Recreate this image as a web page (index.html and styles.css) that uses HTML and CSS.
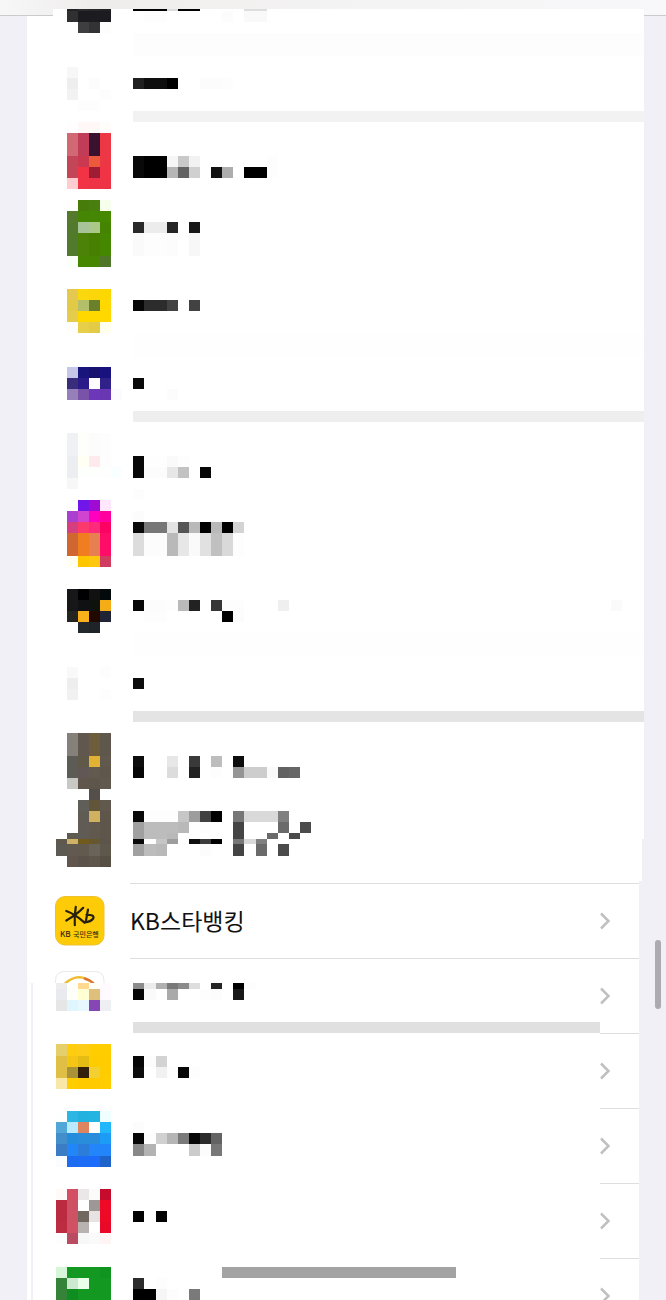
FILE: index.html
```html
<!DOCTYPE html>
<html lang="ko">
<head>
<meta charset="utf-8">
<meta name="viewport" content="width=device-width, initial-scale=1">
<title>설정</title>
<link rel="stylesheet" href="styles.css">
</head>
<body>
<header class="topbar"><div class="topbar-cover"></div></header>
<main class="page">
<section class="group group-upper">
  <div class="row row-first">
    <svg class="icon" viewBox="55 16 60 42" data-cells="9 2 6 222224 2c2c2e 29292b 222224;11 11 6 303032 1c1b20 1c1b20 1c1b20;22 11 7 3e3e40 333335 fdfdfd"></svg>
    <svg class="label" viewBox="130 16 200 42" data-cells="9 2 12 000 000 000 ddd 000 000 - - - - ddd ddd;11 11 12 - fdfdfd fdfdfd - - - - - fcfcfc - f9f9f9 f9f9f9"></svg>
    <div class="haze"></div>
  </div>
  <div class="row">
    <svg class="icon" viewBox="55 58 60 75" data-cells="67 11 6 f7f7f7;78 11 6 eee - fcfcfc;89 11 6 f2f2f2 - - fdfdfd;100 11 7 fdfdfd fdfdfd;122 11 6 fffdfd fff8f7 fff8f7 fffdfc"></svg>
    <svg class="label" viewBox="130 58 200 75" data-cells="78 11 12 202020 0e0e0e 0e0e0e 000 - - fcfcfc fcfcfc fdfdfd"></svg>
    <div class="divider"></div>
  </div>
  <div class="row">
    <svg class="icon" viewBox="55 133 60 75" data-cells="133 23 6 d06973 c13c57 3a112f ed3745;156 11 6 c24558 cb3951 ed5a3b ed3745;167 11 6 c24558 f23345 9e1c34 f03345;178 11 6 ffcccf f23345 ef3346 ef3346"></svg>
    <svg class="label" viewBox="130 133 200 75" data-cells="156 11 12 090909 000 000 f6f6f6 c9c9c9 f2f2f2 - - - - - - fdfdfd;167 11 12 090909 000 000 b5b5b5 626262 d0d0d0 - 111 adadad - 000 000 fdfdfd"></svg>
  </div>
  <div class="row">
    <svg class="icon" viewBox="55 208 60 75" data-cells="200 11 6 fdfffc 477c0b 47800e f6ffeb;211 11 6 567a2d 468605 468605 468900;222 11 6 517a2c a8c399 aac989 458400;233 23 6 517a2c 4b8207 478001 458700;256 11 6 fafff7 468600 468600 50762a"></svg>
    <svg class="label" viewBox="130 208 200 75" data-cells="222 11 12 292929 ececec ececec 252525 - 171717;233 23 12 fafafa fdfdfd fdfdfd fcfcfc - f7f7f7"></svg>
  </div>
  <div class="row">
    <svg class="icon" viewBox="55 283 60 75" data-cells="289 11 6 e5c84f fbd80e fbd60b fdd800;300 11 6 e2ca47 b4c069 6b802a ffd800;311 11 6 e5cc4c ffd800 ffd800 ffd800;322 11 6 fdfdfb e8cf4a e3cb45 ffffef"></svg>
    <svg class="label" viewBox="130 283 200 75" data-cells="300 11 12 060606 2c2c2c 2c2c2c 424242 - 424242"></svg>
    <div class="haze haze-faint"></div>
  </div>
  <div class="row">
    <svg class="icon" viewBox="55 358 60 75" data-cells="367 11 6 c5c6e8 18157d 18126f 18127f;378 11 6 392c7b 2b1b89 fff 30218a;389 11 6 977fb9 7853a8 6d37b9 6937b3 fcf9ff"></svg>
    <svg class="label" viewBox="130 358 200 75" data-cells="378 11 12 0a0a0a;389 11 15 fcfcfc"></svg>
    <div class="divider divider-mid"></div>
  </div>
  <div class="row">
    <svg class="icon" viewBox="55 433 60 75" data-cells="433 23 6 eff1f4 fefefb fcfcfc fdfdfd;456 11 6 eceef1 fffff3 ffebee fdfdfd;467 11 6 eceef1 fdfffc fcfffb fefefe f9ffff;478 11 6 f7f7f7"></svg>
    <svg class="label" viewBox="130 433 200 75" data-cells="456 11 12 080808 fefefe fefefe fafafa fdfdfd;467 11 12 080808 fcfcfc fcfcfc e7e7e7 c2c2c2 - 080808;489 11 12 fdfdfd"></svg>
  </div>
  <div class="row">
    <svg class="icon" viewBox="55 508 60 75" data-cells="500 11 6 fdffff 7116e8 a00bd4 ffe8ff;511 11 6 aa3fd0 d044d0 ff00bf ff009e;522 11 6 d53f80 fc396c ff2b7a fb0263;533 23 6 d06630 f07d20 e77f52 ff0b68;556 11 6 fffff2 ffc600 ffc80c d03d60"></svg>
    <svg class="label" viewBox="130 508 200 75" data-cells="511 11 12 fcfcfc;522 11 12 090909 777 777 e3e3e3 555 b9b9b9 000 b9b9b9 000 d3d3d3;533 23 12 dcdcdc fcfcfc fcfcfc b9b9b9 e7e7e7 fafafa e1e1e1 c0c0c0 d9d9d9 fdfdfd"></svg>
  </div>
  <div class="row">
    <svg class="icon" viewBox="55 583 60 75" data-cells="589 11 6 171719 000002 111112 040a0b;600 11 6 171719 101112 0e120d f4ad17;611 11 6 242420 f8b01b 210900 202435;622 11 7 23282c 1e2427"></svg>
    <svg class="label" viewBox="130 583 200 75" data-cells="600 11 12 060606 fcfcfc fcfcfc fdfdfd b9b9b9 222 - 363636 fdfdfd fdfdfd - - - efefef;600 11 55 fafafa;611 11 12 - fdfdfd fdfdfd - - - - - 000 fcfcfc"></svg>
    <div class="haze haze-faint"></div>
  </div>
  <div class="row">
    <svg class="icon" viewBox="55 658 60 75" data-cells="667 11 6 f9f9f9 - - fdfdfd;678 11 6 eee;689 11 6 f1f1f1 - - fdfdfd"></svg>
    <svg class="label" viewBox="130 658 200 75" data-cells="678 11 12 0c0c0c"></svg>
    <div class="divider divider-dark"></div>
  </div>
  <div class="row">
    <svg class="icon" viewBox="55 733 60 75" data-cells="733 23 6 85817a 60584e 6d5d3a 5f574b;756 11 6 5d5b55 605947 e1b233 61584e;767 11 6 5d5b55 615755 62594f 5f574c;778 11 6 c8c8c4 60564c 5e564b 61594e;789 11 8 544f4a"></svg>
    <svg class="label" viewBox="130 733 200 75" data-cells="756 11 12 0d0d0d - - e7e7e7 - 393939 - bdbdbd - 0d0d0d;767 11 12 060606 - - dcdcdc - 222 - fdfdfd - 959595 cdcdcd cdcdcd fafafa 626262 666"></svg>
  </div>
  <div class="row row-step">
    <svg class="icon" viewBox="55 808 60 75" data-cells="800 11 7 605e58 62563a 61594d;811 11 7 605b53 d0b162 5e564a;822 11 7 605b54 62594e 5e564b;833 6 6 5e5b51 605b54 62594e 5e564b;839 5 5 5f584f d0b168 705a1c 65572e 5d554a;844 12 5 5d5a54 625a50 625a4f 69635a 5e574b;856 11 6 60564d 5b5349 5e564b 564f44"></svg>
    <svg class="label" viewBox="130 808 200 75" data-cells="811 11 12 090909 fdfdfd fdfdfd fdfdfd c6c6c6 9d9d9d 404040 000 - 777 d9d9d9 d9d9d9 d9d9d9 808080;822 11 12 a0a0a0 bcbcbc bcbcbc bcbcbc b9b9b9 - fdfdfd - - 444 - - - 6a6a6a - 4b4b4b;833 6 12 a0a0a0 bcbcbc bcbcbc b9b9b9 - - - - - 444 - - 6a6a6a - 4b4b4b;839 5 12 090909 fdfdfd c6c6c6 9d9d9d - 0f0f0f 3b3b3b 000 - 777 d9d9d9 808080;844 12 12 a0a0a0 bcbcbc b9b9b9 - - - fcfcfc - - 444 - 6a6a6a - 4b4b4b"></svg>
  </div>
</section>
<section class="group group-lower">
  <a class="row lined" href="#kb">
    <svg class="icon" viewBox="55 883 60 75" aria-hidden="true">
      <rect x="55.5" y="896.5" width="48.5" height="48.5" rx="9.5" fill="#fecb08" stroke="#edc02f"/>
      <g fill="none" stroke="#26200c" stroke-width="2.2" stroke-linecap="round" stroke-linejoin="round">
        <path d="M75.8 906.8Q74.2 915 74.8 925.2M66.3 911Q75 914 84.5 922.6M83.2 907.8Q77 914.5 66.3 920.5"/>
        <path d="M88 909.5L85.800 921.500M86.500 914.800C91 914.500 94.800 916 93.200 918.500C91.500 920.800 88.500 922 84.800 922.300"/>
      </g>
      <text class="icon-text" x="60" y="937">KB</text>
      <text class="icon-text icon-text-ko" x="73" y="937">국민은행</text>
    </svg>
    <span class="name">KB스타뱅킹</span>
    <svg class="chevron" viewBox="0 0 10 18" aria-hidden="true"><path d="M1 1.500L8.500 9L1 16.500"/></svg>
  </a>
  <div class="row lined">
    <svg class="icon" viewBox="55 958 60 75">
      <path d="M55.5 983V981Q55.5 971.5 65 971.5H94.5Q104 971.5 104 981V983" fill="#fff" stroke="#e9e9eb"/>
      <path d="M65 983.500Q79 971 93.500 983.500" fill="none" stroke="#edbd2e" stroke-width="2.5"/>
      <path d="M84 978.300Q90 980 93.500 983.500" fill="none" stroke="#dc7737" stroke-width="2.5"/>
      <g data-cells="983 6 5 ededf0 fffffa ffd98f fefff9 fffafd;989 11 5 e9e9f0 fffffa ffffd3 dfbf7c fffafd;1000 11 5 e6e6e6 dff6ff e9f7ff 8746b6 eeeff2"></g>
    </svg>
    <svg class="label" viewBox="130 958 200 75" data-cells="983 6 12 8b8b8b ececec b0b0b0 797979 8b8b8b dedede - 252525 - 000 fdfdfd;989 11 12 060606 fafafa - aaa - - fdfdfd fcfcfc - 181818"></svg>
    <svg class="chevron" viewBox="0 0 10 18" aria-hidden="true"><path d="M1 1.500L8.500 9L1 16.500"/></svg>
    <div class="divider divider-end"></div>
  </div>
  <div class="row short-line">
    <svg class="icon" viewBox="55 1033 60 75" data-cells="1044 12 5 e5cf6b ffcc10 fccc18 ffcd00 ffcd00;1056 11 5 e0bf46 f5c516 e5bc13 ffcc00 ffcc00;1067 11 5 e0bf46 aa9238 33210c f4cf31 ffcc00;1078 11 5 f8e7a7 ffcd00 ffcb00 ffcb00 ffcd00"></svg>
    <svg class="label" viewBox="130 1033 200 75" data-cells="1056 11 12 060606 fcfcfc d3d3d3;1067 11 12 0d0d0d - f1f1f1 fdfdfd 060606 fdfdfd"></svg>
    <svg class="chevron" viewBox="0 0 10 18" aria-hidden="true"><path d="M1 1.500L8.500 9L1 16.500"/></svg>
  </div>
  <div class="row short-line">
    <svg class="icon" viewBox="55 1108 60 75" data-cells="1111 11 5 fdfefe 2bb6e3 23b2e0 23b4e2 efffff;1122 11 5 50a7d8 b9ebff de845e fff 22b7fb;1133 11 5 428fcc 248cdd 2a8ddb 2a8ddb 1d9cf5;1144 12 5 3b7cc5 2285f8 2b7dd9 2286fa 2286fa;1156 11 5 f9fdff 1b6cf0 1c6cf6 1b6cfb 1e63ca"></svg>
    <svg class="label" viewBox="130 1108 200 75" data-cells="1122 11 12 fcfcfc;1133 11 12 060606 fdfdfd d0d0d0 b5b5b5 797979 060606 2b2b2b 636363;1144 12 12 888 b3b3b3 - - - cbcbcb fcfcfc 777"></svg>
    <svg class="chevron" viewBox="0 0 10 18" aria-hidden="true"><path d="M1 1.500L8.500 9L1 16.500"/></svg>
  </div>
  <div class="row short-line">
    <svg class="icon" viewBox="55 1183 60 75" data-cells="1189 11 5 fff9f7 d44f63 ebe7e9 fbfbfa c60c2c;1200 11 5 bb2b40 cf5164 fff 9d9796 ee0926;1211 11 5 bb2b40 cf5164 716960 e6e3e2 ee0926;1222 11 5 bd2d41 d15063 b8b2b0 fff ea0828;1233 11 5 fefdfd b94c61 f8f7f8 fafafa fff5f5"></svg>
    <svg class="label" viewBox="130 1183 200 75" data-cells="1211 11 12 000 fdfdfd 000"></svg>
    <svg class="chevron" viewBox="0 0 10 18" aria-hidden="true"><path d="M1 1.500L8.500 9L1 16.500"/></svg>
  </div>
  <div class="row short-line row-last">
    <svg class="icon" viewBox="55 1258 60 75" data-cells="1267 11 5 d7f5d9 139822 139822 139822 109420;1278 11 5 348339 cce8ce e9ffea 139822 139822;1289 12 5 348339 108d20 139822 139822 139822"></svg>
    <svg class="label" viewBox="130 1258 200 75" data-cells="1278 11 12 2c2c2c - fdfdfd;1289 12 12 000 000 f6f6f6 fdfdfd - 7a7a7a"></svg>
    <svg class="chevron" viewBox="0 0 10 18" aria-hidden="true"><path d="M1 1.500L8.500 9L1 16.500"/></svg>
  </div>
</section>
</main>
<div class="scroll-thumb"></div>
<div class="home-indicator"></div>
<script src="mosaic.js"></script>
</body>
</html>
```
FILE: styles.css
```css
* { box-sizing: border-box; }

body {
  margin: 0;
  position: relative;
  background: #f1f0f6;
  font-family: "Noto Sans CJK KR", sans-serif;
  color: #111;
}

.topbar {
  display: flex;
  flex-direction: column;
  justify-content: flex-end;
  height: 16px;
  padding: 0 22px 0 53px;
  border-bottom: 1px solid #cbcbce;
  background: linear-gradient(90deg, #f7f7f8, #efedec 14%, #f4f3f3 50%, #f8f8fa);
}

.topbar-cover {
  height: 7px;
  margin-bottom: -1px;
  background: #fff;
}

.group-upper {
  margin: 0 22px 0 27px;
}

.group-lower {
  margin: 0 27px;
  background: linear-gradient(#f1f0f6, #f1f0f6) 4px 100px / 2px 100% no-repeat #fff;
}

.row {
  display: grid;
  grid-template: 75px / 75px 1fr 39px;
  padding-left: 28px;
  background: #fff;
  color: inherit;
  text-decoration: none;
}

.group-lower .row { background: none; }

.row-first { grid-template-rows: 42px; }

.row-last {
  height: 42px;
  overflow: hidden;
}

.row-step {
  background:
    linear-gradient(#fff, #fff) 0 0 / 100% 31px no-repeat,
    linear-gradient(#fff, #fff) 0 0 / calc(100% - 2px) 73px no-repeat,
    linear-gradient(#fff, #fff) 0 0 / calc(100% - 5px) 100% no-repeat;
}

.icon,
.label {
  grid-row: 1;
  display: block;
  overflow: visible;
  z-index: 1;
}

.icon {
  grid-column: 1;
  width: 60px;
}

.label {
  grid-column: 2;
  width: 200px;
}

.name {
  grid-area: 1 / 2;
  align-self: center;
  padding-bottom: 2px;
  font-size: 23px;
  line-height: 32px;
}

.icon-text {
  font-family: "Noto Sans CJK KR", sans-serif;
  font-size: 8px;
  font-weight: 500;
  fill: #3a2d0a;
}

.icon-text-ko { font-size: 7px; }

.chevron {
  grid-area: 1 / 3;
  align-self: center;
  width: 10px;
  height: 18px;
  fill: none;
  stroke: #c0c0c3;
  stroke-width: 2.5;
}

.lined::before,
.short-line::before {
  content: "";
  grid-area: 1 / 2 / 2 / 4;
  border-top: 1px solid #dedee0;
}

.short-line::before { grid-column: 3; }

.divider {
  grid-area: 1 / 2 / 2 / 4;
  align-self: end;
  height: 11px;
  margin: 0 0 11px 3px;
  background: #f2f2f2;
}

.divider-mid { background: #eee; }

.divider-dark { background: #e4e4e4; }

.divider-end {
  grid-column: 2;
  margin-bottom: 0;
  background: #e0e0e0;
}

.haze {
  grid-area: 1 / 2 / 2 / 4;
  align-self: end;
  height: 23px;
  margin: 0 0 2px 3px;
  background: #fdfdfd;
}

.haze-faint { background: #fefefe; }

.scroll-thumb {
  position: absolute;
  top: 940px;
  right: 5px;
  width: 6px;
  height: 69px;
  border-radius: 3px;
  background: #acabb1;
}

.home-indicator {
  position: fixed;
  bottom: 22px;
  left: 33.4%;
  width: 35%;
  height: 11px;
  background: #a3a3a3;
  z-index: 2;
}
```
FILE: mosaic.js
```js
// Each strip reads "top height firstColumn color color ..."; "-" leaves a cell empty.
const edge = (column) => Math.round((column * 100) / 9);

document.querySelectorAll("[data-cells]").forEach((art) => {
  art.dataset.cells.split(";").forEach((strip) => {
    const [top, height, first, ...colors] = strip.trim().split(/\s+/);
    colors.forEach((color, index) => {
      if (color === "-") return;
      const column = Number(first) + index;
      const cell = document.createElementNS("http://www.w3.org/2000/svg", "rect");
      cell.setAttribute("x", edge(column));
      cell.setAttribute("y", top);
      cell.setAttribute("width", edge(column + 1) - edge(column));
      cell.setAttribute("height", height);
      cell.setAttribute("fill", "#" + color);
      cell.setAttribute("shape-rendering", "crispEdges");
      art.append(cell);
    });
  });
});
```
